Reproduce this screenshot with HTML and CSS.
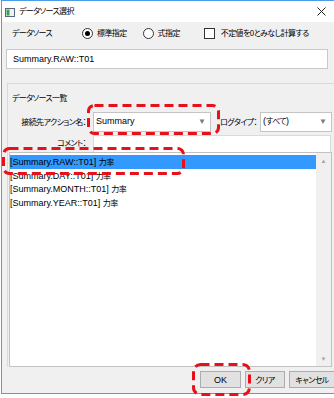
FILE: index.html
```html
<html lang="ja">
<head>
    <meta charset="utf-8">
    <title>データソース選択</title>
    <link rel="stylesheet" href="styles.css">
</head>
<body>
<div class="page">
    <div class="window">
        <div class="titlebar">
            <svg class="app-icon" width="10" height="9" viewBox="0 0 10 9">
                <rect x="0.5" y="0.5" width="9" height="8" fill="#eef2f7" stroke="#56687f"/>
                <rect x="1.5" y="1.5" width="3" height="6" fill="#3aa34a"/>
            </svg>
            <span class="title ja">データソース選択</span>
            <svg class="close" width="9" height="9" viewBox="0 0 9 9">
                <path d="M0.5 0.5 L8.5 8.5 M8.5 0.5 L0.5 8.5" stroke="#222" stroke-width="1"/>
            </svg>
        </div>
        <div class="content">
            <div class="source-row">
                <span class="label ja">データソース</span>
                <span class="option first"><span class="radio checked"></span><span class="ja">標準指定</span></span>
                <span class="option"><span class="radio"></span><span class="ja">式指定</span></span>
                <span class="option"><span class="check"></span><span class="ja">不定値を0とみなし計算する</span></span>
            </div>
            <div class="textbox">Summary.RAW::T01</div>

            <div class="group">
                <div class="group-title ja">データソース一覧</div>
                <div class="form-row">
                    <span class="field-label ja">接続先アクション名：</span>
                    <div class="combo action">
                        <span class="value">Summary</span>
                        <span class="arrow">▼</span>
                    </div>
                    <span class="field-label2 ja">ログタイプ：</span>
                    <div class="combo logtype">
                        <span class="value">(<span class="ja">すべて</span>)</span>
                        <span class="arrow">▼</span>
                    </div>
                </div>
                <div class="form-row comment-row">
                    <span class="field-label ja">コメント：</span>
                    <div class="input comment"></div>
                </div>
                <div class="listbox">
                    <ul class="items">
                        <li class="selected">[Summary.RAW::T01] <span class="ja">力率</span></li>
                        <li>[Summary.DAY::T01] <span class="ja">力率</span></li>
                        <li>[Summary.MONTH::T01] <span class="ja">力率</span></li>
                        <li>[Summary.YEAR::T01] <span class="ja">力率</span></li>
                    </ul>
                    <div class="scrollbar">
                        <span class="sb-arrow">▲</span>
                        <span class="sb-arrow">▼</span>
                    </div>
                </div>
            </div>

            <div class="buttons">
                <button class="btn ok">OK</button>
                <button class="btn clear ja">クリア</button>
                <button class="btn cancel ja">キャンセル</button>
            </div>
        </div>
    </div>

    <!-- red highlight marks -->
    <svg class="mark mark-combo" width="133" height="31">
        <rect x="1.5" y="1.5" width="130" height="28" rx="6" />
    </svg>
    <svg class="mark mark-item" width="183" height="28">
        <rect x="1.5" y="1.5" width="180" height="25" rx="6" />
    </svg>
    <svg class="mark mark-ok" width="59" height="33">
        <rect x="1.5" y="1.5" width="56" height="30" rx="7" />
    </svg>
</div>
</body>
</html>
```

FILE: styles.css
```css
*,
*:before,
*:after {
    margin: 0;
    padding: 0;
    box-sizing: border-box;
}

html,
body {
    width: 334px;
    height: 398px;
    overflow: hidden;
    background-color: #ffffff;
}

body {
    font-family: "Liberation Sans", "Noto Sans CJK JP", sans-serif;
    font-size: 9px;
    line-height: 1.3;
    color: #000000;
}

.ja {
    font-family: "Noto Sans CJK JP", sans-serif;
    font-size: 8px;
    letter-spacing: -0.6px;
    font-feature-settings: "palt";
}

.page {
    position: relative;
    width: 334px;
    height: 398px;
}

.window {
    margin-left: 1px;
    width: 344px;
    height: 394px;
    border: 1px solid #4a9de8;
    background-color: #f0f0f0;
    display: flex;
    flex-direction: column;
}

/* title bar */
.titlebar {
    height: 21px;
    background-color: #ffffff;
    display: flex;
    align-items: center;
    padding-left: 3px;
}

.titlebar .app-icon {
    margin-top: 1px;
}

.titlebar .title {
    margin-left: 4px;
}

.titlebar .close {
    margin-left: auto;
    margin-right: 18px;
}

/* body */
.content {
    flex: 1;
    display: flex;
    flex-direction: column;
}

.source-row {
    height: 16px;
    margin-top: 3px;
    display: flex;
    align-items: center;
    padding-left: 10px;
}

.source-row .label {
    width: 70px;
}

.option {
    display: flex;
    align-items: center;
    gap: 4px;
}

.option.first {
    margin-right: 16px;
}

.option + .option {
    margin-right: 24px;
}

.option:last-child {
    margin-right: 0;
}

.radio {
    width: 11px;
    height: 11px;
    border: 1px solid #333333;
    border-radius: 50%;
    background-color: #ffffff;
    display: flex;
    align-items: center;
    justify-content: center;
}

.radio.checked:after {
    content: "";
    width: 5px;
    height: 5px;
    border-radius: 50%;
    background-color: #000000;
}

.check {
    width: 11px;
    height: 11px;
    border: 1px solid #333333;
    background-color: #ffffff;
    margin-right: 2px;
}

.textbox {
    margin-top: 8px;
    margin-left: 4px;
    width: 322px;
    height: 20px;
    border: 1px solid #c9c9c9;
    background-color: #ffffff;
    padding-left: 6px;
    line-height: 18px;
}

/* data source list group */
.group {
    margin-top: 14px;
    margin-left: 5px;
    border-top: 1px solid #d9d9d9;
    border-left: 1px solid #d9d9d9;
    display: flex;
    flex-direction: column;
}

.group-title {
    padding-top: 9px;
    padding-left: 4px;
    height: 28px;
}

.form-row {
    display: flex;
    align-items: center;
    height: 20px;
}

.field-label {
    width: 78px;
    text-align: right;
}

.field-label2 {
    margin-left: 9px;
    width: 40px;
}

.combo {
    height: 20px;
    margin-left: 7px;
    border: 1px solid #c4c4c4;
    background-color: #ffffff;
    display: flex;
    align-items: center;
    padding-left: 2px;
}

.combo .arrow {
    margin-left: auto;
    width: 16px;
    text-align: center;
    font-size: 8px;
    color: #7a7a7a;
}

.combo.action {
    width: 118px;
}

.combo.logtype {
    width: 72px;
    margin-left: 0;
}

.comment-row {
    margin-top: 3px;
    height: 17px;
}

.input.comment {
    margin-left: 7px;
    width: 238px;
    height: 17px;
    border: 1px solid #dadada;
    border-bottom: none;
    background-color: #ffffff;
}

.listbox {
    margin-left: 1px;
    width: 323px;
    height: 215px;
    border: 1px solid #c2c2c2;
    background-color: #ffffff;
    display: flex;
}

.items {
    list-style: none;
    flex: 1;
    padding-top: 2px;
}

.items li {
    height: 13.5px;
    line-height: 13.5px;
    white-space: nowrap;
}

.items li.selected {
    background-color: #3399ff;
}

.scrollbar {
    width: 15px;
    background-color: #f0f0f0;
    display: flex;
    flex-direction: column;
    justify-content: space-between;
    align-items: center;
    padding: 5px 0 2px;
}

.sb-arrow {
    font-size: 6px;
    color: #a6a6a6;
}

/* buttons */
.buttons {
    margin-top: 4px;
    margin-left: 198px;
    display: flex;
    gap: 4px;
}

.btn {
    height: 17px;
    border: 1px solid #adadad;
    background-color: #e1e1e1;
    color: #000000;
    font-family: "Liberation Sans", "Noto Sans CJK JP", sans-serif;
    font-size: 9px;
}

.btn.ja {
    font-family: "Noto Sans CJK JP", sans-serif;
    font-size: 8px;
}

.btn.ok {
    width: 41px;
}

.btn.clear {
    width: 40px;
}

.btn.cancel {
    width: 46px;
}

/* highlight marks drawn over the dialog */
.mark {
    position: absolute;
}

.mark rect {
    fill: none;
    stroke: #e8101b;
    stroke-width: 3;
    stroke-dasharray: 9 5;
}

.mark-combo {
    left: 87px;
    top: 104px;
}

.mark-item {
    left: 2px;
    top: 147px;
}

.mark-ok {
    left: 192px;
    top: 363px;
}
```
